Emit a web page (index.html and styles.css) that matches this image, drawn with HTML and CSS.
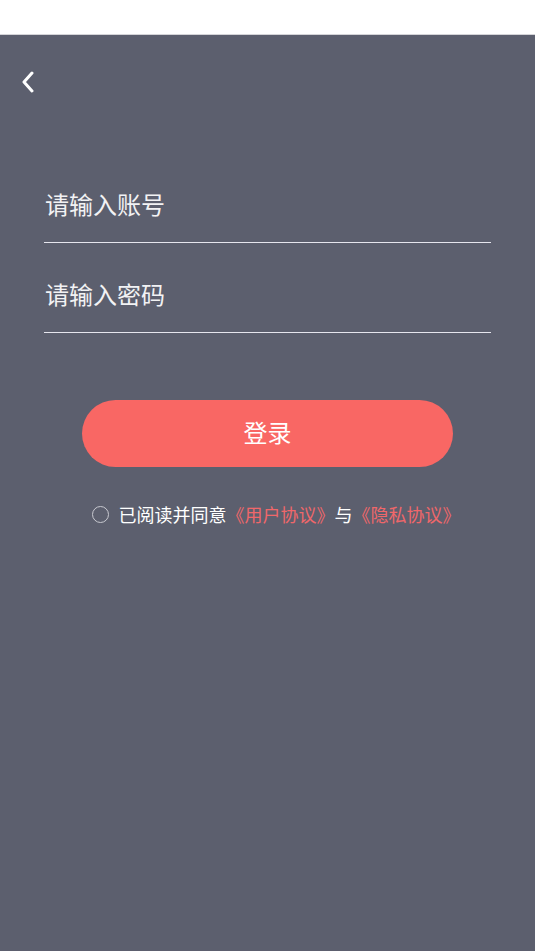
FILE: index.html
```html
<!DOCTYPE html>
<html lang="zh-CN">
<head>
    <meta charset="UTF-8">
    <meta name="viewport" content="width=device-width, initial-scale=1.0">
    <title>登录</title>
    <link rel="stylesheet" href="styles.css">
</head>
<body>
    <div class="status-bar"></div>
    <div class="page">
        <div class="nav">
            <svg class="back" width="14" height="22" viewBox="0 0 14 22">
                <path d="M11 2 L3 11 L11 20" fill="none" stroke="#ffffff" stroke-width="3" stroke-linecap="round" stroke-linejoin="round"/>
            </svg>
        </div>

        <div class="form">
            <div class="field">
                <input type="text" placeholder="请输入账号">
            </div>
            <div class="field">
                <input type="password" placeholder="请输入密码">
            </div>
        </div>

        <button class="login-btn">登录</button>

        <div class="agree">
            <span class="radio"></span>
            <span>已阅读并同意</span><span class="link">《用户协议》</span><span>与</span><span class="link">《隐私协议》</span>
        </div>
    </div>
</body>
</html>
```

FILE: styles.css
```css
* {
    box-sizing: border-box;
}
body {
    margin: 0;
    font-family: "Noto Sans CJK SC", "Noto Sans", sans-serif;
    background-color: #5c5f6e;
    height: 951px;
    overflow: hidden;
}
.status-bar {
    height: 35px;
    background-color: #ffffff;
    border-bottom: 1px solid #d4d4d8;
}
.page {
    background-color: #5c5f6e;
}
.nav {
    height: 96px;
    padding: 36px 0 0 21px;
}
.back {
    display: block;
}
.form {
    padding: 0 44px;
}
.field {
    height: 90px;
    display: flex;
    align-items: flex-end;
    border-bottom: 1px solid #e6e6ee;
}
.field:first-child {
    height: 112px;
}
.field input {
    width: 100%;
    background: transparent;
    border: none;
    outline: none;
    color: #ffffff;
    font-family: inherit;
    font-size: 24px;
    padding: 0 0 0 1px;
    height: 34px;
    margin-bottom: 22px;
}
.field input::placeholder {
    color: #f2f2f4;
}
.login-btn {
    display: block;
    margin: 67px auto 0 auto;
    width: 371px;
    height: 67px;
    padding: 0 0 4px 0;
    border: none;
    border-radius: 34px;
    background-color: #f96764;
    color: #ffffff;
    font-family: inherit;
    font-size: 24px;
}
.agree {
    display: flex;
    align-items: center;
    justify-content: center;
    margin-top: 34px;
    padding-left: 17px;
    font-size: 18px;
    color: #ffffff;
}
.radio {
    width: 17px;
    height: 17px;
    border: 1.5px solid #c8c9d0;
    border-radius: 50%;
    margin-right: 10px;
}
.link {
    color: #f0676a;
}
```
